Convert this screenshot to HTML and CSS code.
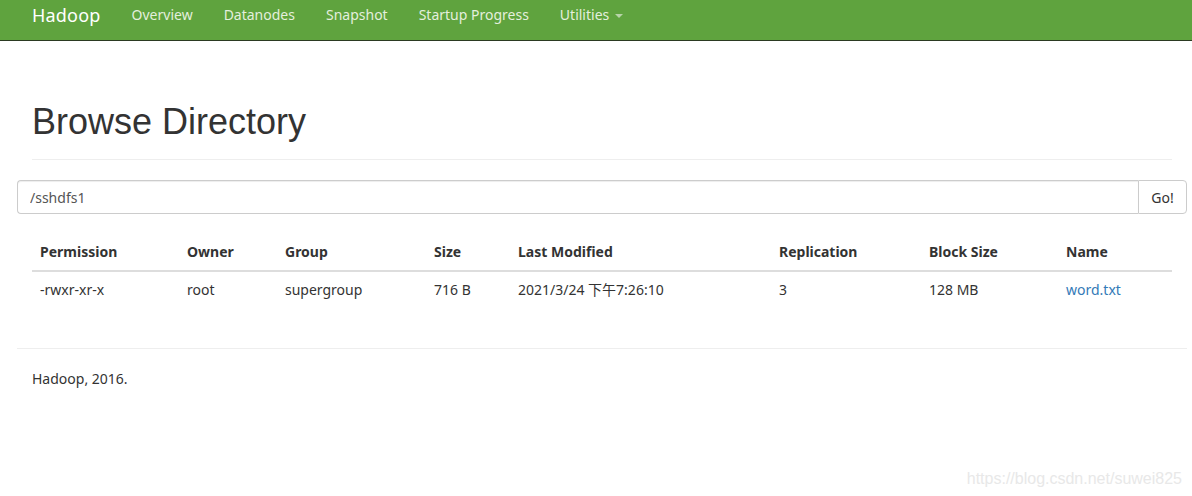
FILE: index.html
```html
<!DOCTYPE html>
<html>
<head>
<meta charset="utf-8">
<link rel="stylesheet" href="styles.css">
</head>
<body>
<header class="navbar">
  <div class="nav-inner">
    <span class="brand">Hadoop</span>
    <ul class="nav">
      <li>Overview</li>
      <li>Datanodes</li>
      <li>Snapshot</li>
      <li>Startup Progress</li>
      <li class="dropdown">Utilities <span class="caret"></span></li>
    </ul>
  </div>
</header>
<main class="container">
  <div class="page-header">
    <h1>Browse Directory</h1>
  </div>
  <div class="input-group">
    <input class="form-control" type="text" value="/sshdfs1">
    <button class="btn">Go!</button>
  </div>
  <table class="table">
    <colgroup>
      <col style="width:147px"><col style="width:98px"><col style="width:149px"><col style="width:84px">
      <col style="width:261px"><col style="width:150px"><col style="width:137px"><col>
    </colgroup>
    <thead>
      <tr><th>Permission</th><th>Owner</th><th>Group</th><th>Size</th><th>Last Modified</th><th>Replication</th><th>Block Size</th><th>Name</th></tr>
    </thead>
    <tbody>
      <tr><td>-rwxr-xr-x</td><td>root</td><td>supergroup</td><td>716 B</td><td>2021/3/24 下午7:26:10</td><td>3</td><td>128 MB</td><td><a href="#">word.txt</a></td></tr>
    </tbody>
  </table>
  <hr class="footer-rule">
  <footer class="footer">Hadoop, 2016.</footer>
</main>
<div class="watermark">https://blog.csdn.net/suwei825</div>
</body>
</html>
```
FILE: styles.css
```css
html, body {
  margin: 0;
  padding: 0;
  background: #fff;
}
body {
  font-family: "Noto Sans", "Noto Sans CJK SC", sans-serif;
  font-size: 14px;
  color: #333;
  width: 1192px;
  height: 496px;
  overflow: hidden;
  position: relative;
}
.navbar {
  background: #5fa33e;
  height: 40px;
  border-bottom: 1px solid #2b3a22;
}
.nav-inner {
  display: flex;
  align-items: flex-start;
  height: 40px;
  padding-left: 32px;
}
.brand {
  color: #fff;
  font-size: 18px;
  margin-right: 31px;
  line-height: 30px;
  letter-spacing: 0.2px;
}
.nav {
  display: flex;
  list-style: none;
  margin: 0;
  padding: 0;
  gap: 31px;
}
.nav li {
  color: #e4efdd;
  font-size: 14px;
  line-height: 30px;
}
.caret {
  display: inline-block;
  width: 0;
  height: 0;
  border-top: 4px solid #b8d4a8;
  border-left: 4px solid transparent;
  border-right: 4px solid transparent;
  vertical-align: middle;
  margin-left: 2px;
}
.container {
  padding: 0 20px 0 17px;
}
.page-header {
  margin: 0 0 0 15px;
  width: 1140px;
  padding: 61px 0 17px;
  border-bottom: 1px solid #eee;
}
h1 {
  font-family: "Liberation Sans", Arial, sans-serif;
  font-weight: 400;
  font-size: 36px;
  line-height: 40px;
  margin: 0;
  color: #333;
}
.input-group {
  display: flex;
  width: 1170px;
  margin-top: 20px;
  height: 34px;
}
.form-control {
  flex: 1;
  height: 34px;
  box-sizing: border-box;
  border: 1px solid #ccc;
  border-right: none;
  border-radius: 4px 0 0 4px;
  padding: 6px 12px;
  font-family: "Noto Sans", sans-serif;
  font-size: 14px;
  color: #555;
  box-shadow: inset 0 1px 1px rgba(0,0,0,.075);
  outline: none;
}
.btn {
  width: 49px;
  height: 34px;
  box-sizing: border-box;
  border: 1px solid #ccc;
  border-radius: 0 4px 4px 0;
  background: #fff;
  font-family: "Noto Sans", sans-serif;
  font-size: 14px;
  color: #333;
  padding: 0;
}
.table {
  margin: 19px 0 0 15px;
  width: 1140px;
  border-collapse: collapse;
  table-layout: fixed;
}
.table th, .table td {
  text-align: left;
  padding: 8px;
  line-height: 20px;
}
.table th {
  font-weight: 700;
  border-bottom: 2px solid #ddd;
  padding-top: 9px;
  padding-bottom: 8px;
}
.table td {
  padding-top: 8px;
}
.table a {
  color: #337ab7;
  text-decoration: none;
}
.footer-rule {
  width: 1170px;
  margin: 40px 0 0 0;
  border: 0;
  border-top: 1px solid #eee;
}
.footer {
  padding: 20px 15px;
  line-height: 20px;
}
.watermark {
  position: absolute;
  right: 10px;
  bottom: 8px;
  font-family: "Liberation Sans", Arial, sans-serif;
  font-size: 16px;
  color: #e8e8e8;
}
```
